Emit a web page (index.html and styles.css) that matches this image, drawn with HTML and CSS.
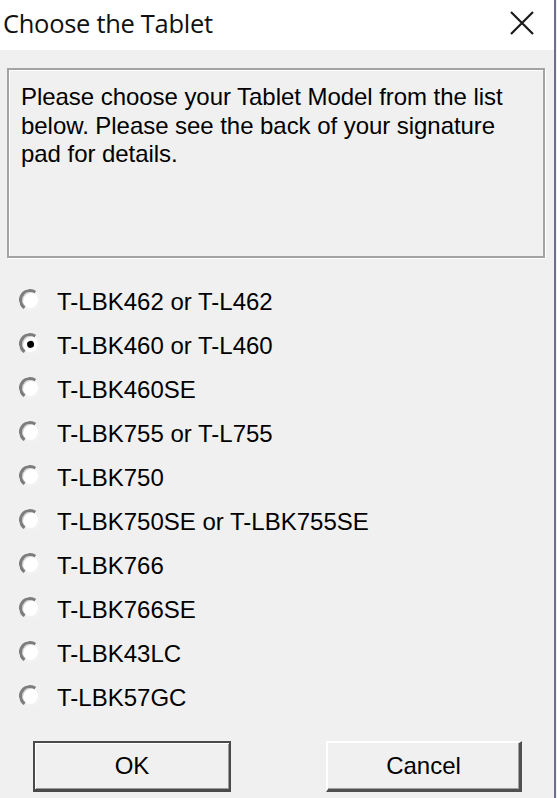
FILE: index.html
```html
<!DOCTYPE html>
<html>
<head>
<meta charset="utf-8">
<link rel="stylesheet" href="styles.css">
</head>
<body>
<div class="window">
  <div class="titlebar">
    <span class="title">Choose the Tablet</span>
    <svg class="close" width="24" height="24" viewBox="0 0 24 24"><path d="M1 1 L23 23 M23 1 L1 23" stroke="#1a1a1a" stroke-width="2.2" fill="none"/></svg>
  </div>
  <div class="content">
    <div class="infobox">Please choose your Tablet Model from the list below. Please see the back of your signature pad for details.</div>
    <div class="options">
      <div class="row"><span class="radio"></span><span class="label">T-LBK462 or T-L462</span></div>
      <div class="row"><span class="radio checked"></span><span class="label">T-LBK460 or T-L460</span></div>
      <div class="row"><span class="radio"></span><span class="label">T-LBK460SE</span></div>
      <div class="row"><span class="radio"></span><span class="label">T-LBK755 or T-L755</span></div>
      <div class="row"><span class="radio"></span><span class="label">T-LBK750</span></div>
      <div class="row"><span class="radio"></span><span class="label">T-LBK750SE or T-LBK755SE</span></div>
      <div class="row"><span class="radio"></span><span class="label">T-LBK766</span></div>
      <div class="row"><span class="radio"></span><span class="label">T-LBK766SE</span></div>
      <div class="row"><span class="radio"></span><span class="label">T-LBK43LC</span></div>
      <div class="row"><span class="radio"></span><span class="label">T-LBK57GC</span></div>
    </div>
    <div class="buttons">
      <div class="btn btn-default">OK</div>
      <div class="btn btn-cancel">Cancel</div>
    </div>
  </div>
</div>
</body>
</html>
```
FILE: styles.css
```css
html, body {
  margin: 0;
  padding: 0;
}
body {
  width: 557px;
  height: 798px;
  overflow: hidden;
  background: #f0f0f0;
  font-family: "Liberation Sans", Arial, sans-serif;
  color: #000;
}
.window {
  width: 554px;
  height: 798px;
  border-right: 2px solid #6d6d8c;
  background: #f0f0f0;
}
.titlebar {
  height: 50px;
  background: #fff;
  display: flex;
  align-items: center;
  justify-content: space-between;
  padding: 0 20px 0 3px;
  box-sizing: border-box;
}
.title {
  font-family: "Open Sans", "Noto Sans", sans-serif;
  font-size: 25.5px;
  color: #111;
  margin-top: -4px;
  letter-spacing: -0.3px;
}
.close {
  margin-top: -5px;
}
.content {
  padding: 18px 0 0 7px;
}
.infobox {
  width: 538px;
  height: 190px;
  box-sizing: border-box;
  border: 2px solid #a3a3a3;
  box-shadow: 1px 1px 0 #fff, inset 1px 1px 0 #fdfdfd;
  padding: 13px 12px 0 12px;
  font-size: 24px;
  line-height: 28.5px;
  letter-spacing: -0.05px;
}
.options {
  margin-top: 22px;
  padding-left: 12px;
  display: flex;
  flex-direction: column;
}
.row {
  height: 44px;
  display: flex;
  align-items: center;
}
.radio {
  width: 22px;
  height: 22px;
  border-radius: 50%;
  box-sizing: border-box;
  background: #fff;
  border: 3px solid;
  border-color: #7d7d7d #f2f2f2 #f2f2f2 #7d7d7d;
  box-shadow: inset 1px 1px 0 #d0d0d0;
  transform: rotate(-10deg);
  margin-bottom: 4px;
  margin-right: 16px;
  position: relative;
}
.radio.checked::after {
  content: "";
  position: absolute;
  left: 4.5px;
  top: 4.5px;
  width: 7px;
  height: 7px;
  border-radius: 50%;
  background: #000;
}
.label {
  font-size: 24px;
}
.buttons {
  margin-top: 21px;
  display: flex;
  padding-left: 26px;
}
.btn {
  height: 51px;
  box-sizing: border-box;
  display: flex;
  align-items: center;
  justify-content: center;
  font-size: 24px;
  background: #f0f0f0;
}
.btn-default {
  width: 198px;
  border: 2px solid #4a4a4a;
  border-bottom-width: 3px;
  box-shadow: inset 1px 1px 0 #fff, inset -1px -1px 0 #9a9a9a;
}
.btn-cancel {
  width: 196px;
  margin-left: 95px;
  border-top: 2px solid #fff;
  border-left: 2px solid #fff;
  border-right: 3px solid #505050;
  border-bottom: 3px solid #505050;
  box-shadow: inset -1px -1px 0 #a0a0a0;
}
```
